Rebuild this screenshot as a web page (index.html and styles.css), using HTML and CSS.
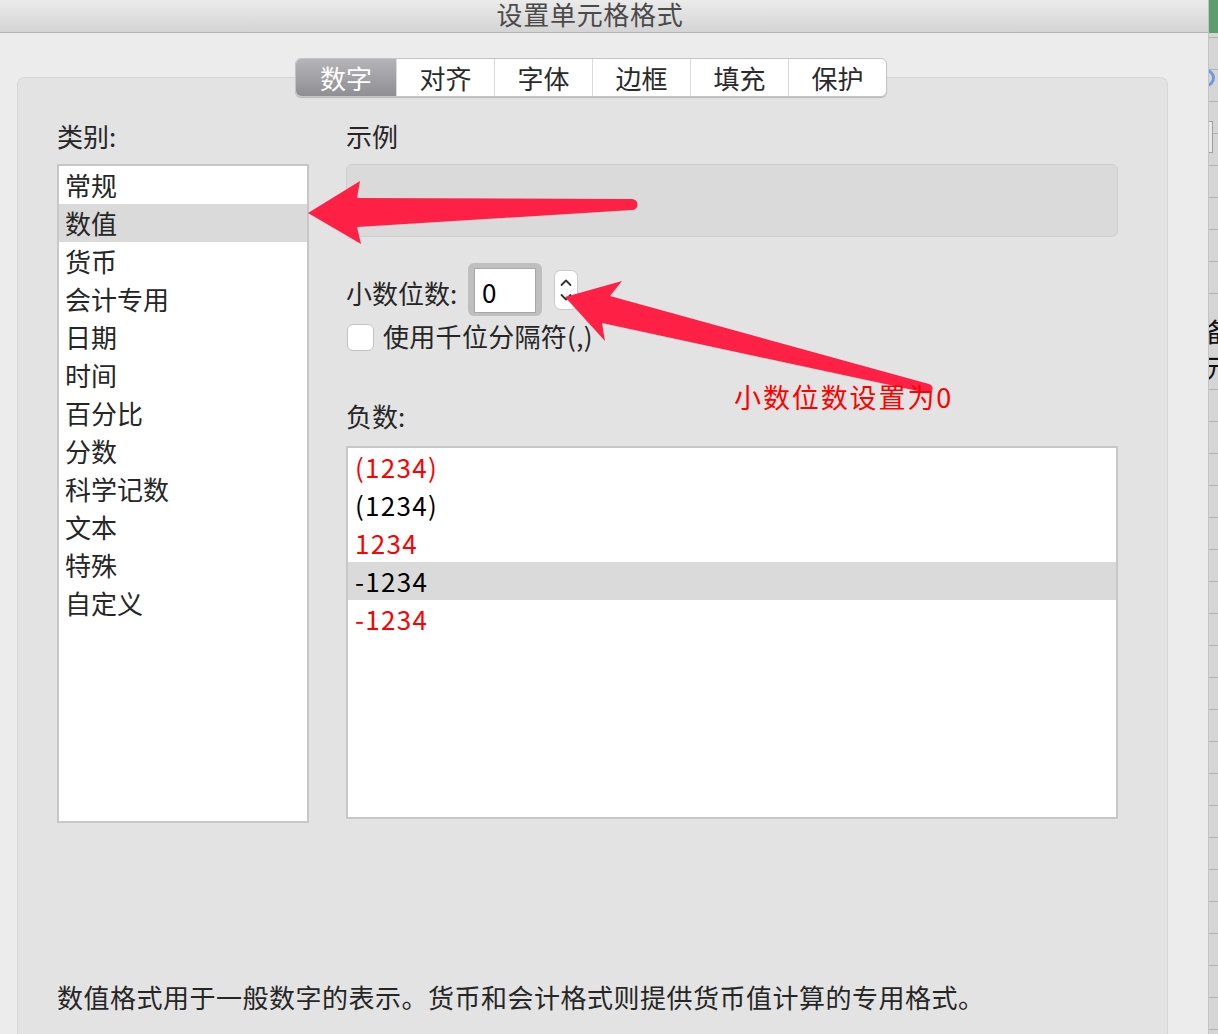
FILE: index.html
```html
<!DOCTYPE html>
<html lang="zh-CN">
<head>
<meta charset="utf-8">
<link rel="stylesheet" href="styles.css">
<title>设置单元格格式</title>
</head>
<body>
<div id="screen">
<div id="dialog">
  <div id="titlebar"><span class="title">设置单元格格式</span></div>
  <div id="panel">
    <div id="tabs">
      <span class="tab selected">数字</span>
      <span class="tab">对齐</span>
      <span class="tab">字体</span>
      <span class="tab">边框</span>
      <span class="tab">填充</span>
      <span class="tab">保护</span>
    </div>
    <div id="columns">
      <div id="category">
        <div class="label">类别:</div>
        <ul class="list" id="catlist">
          <li>常规</li>
          <li class="selected">数值</li>
          <li>货币</li>
          <li>会计专用</li>
          <li>日期</li>
          <li>时间</li>
          <li>百分比</li>
          <li>分数</li>
          <li>科学记数</li>
          <li>文本</li>
          <li>特殊</li>
          <li>自定义</li>
        </ul>
      </div>
      <div id="options">
        <div class="label">示例</div>
        <div id="sample"></div>
        <div id="decimals">
          <span class="caption">小数位数:</span>
          <span class="ring"><span class="field">0</span></span>
          <span class="stepper">
            <svg width="24" height="40" viewBox="0 0 24 40">
              <rect x="0.5" y="0.5" width="23" height="39" rx="6" fill="#fff" stroke="#c9c9c9"/>
              <path d="M7.5 15 L12 10.5 L16.5 15" fill="none" stroke="#333" stroke-width="1.8" stroke-linecap="round" stroke-linejoin="round"/>
              <path d="M7.5 25 L12 29.5 L16.5 25" fill="none" stroke="#333" stroke-width="1.8" stroke-linecap="round" stroke-linejoin="round"/>
            </svg>
          </span>
        </div>
        <label id="thousands"><span class="check"></span>使用千位分隔符(,)</label>
        <div class="label neg">负数:</div>
        <ul class="list" id="neglist">
          <li class="red">(1234)</li>
          <li>(1234)</li>
          <li class="red">1234</li>
          <li class="selected">-1234</li>
          <li class="red">-1234</li>
        </ul>
      </div>
    </div>
    <p id="desc">数值格式用于一般数字的表示。货币和会计格式则提供货币值计算的专用格式。</p>
  </div>
</div>
<div id="behind">
  <div class="sheet-top"></div>
  <div class="sheet-ring"></div>
  <div class="sheet-box"></div>
  <div class="sheet-text first">备</div>
  <div class="sheet-text">元</div>
</div>
</div>

<svg id="marks" width="1218" height="1034" viewBox="0 0 1218 1034">
  <path d="M308 213 L360 181 L357 198 L632 199 A5.5 5.5 0 0 1 632 210 L357 227 L361 244 Z" fill="#ff2145"/>
  <path d="M565 297 L622 281 L610 296 L929 384 A4.5 4.5 0 0 1 927 393 L602 323 L605 341 Z" fill="#ff2145"/>
</svg>
<span id="note">小数位数设置为0</span>
</body>
</html>
```

FILE: styles.css
```css
html, body {
  margin: 0;
  padding: 0;
}
body {
  width: 1218px;
  height: 1034px;
  overflow: hidden;
  position: relative;
  font-family: "Noto Sans CJK SC", "Noto Sans", sans-serif;
  font-size: 26px;
  color: #262626;
  background: #ececec;
}
#screen {
  display: flex;
  height: 1034px;
}
#dialog {
  width: 1208px;
  display: flex;
  flex-direction: column;
  background: #ececec;
}
#titlebar {
  height: 32px;
  display: flex;
  justify-content: center;
  align-items: flex-start;
  background: linear-gradient(#ebebeb, #d4d4d4);
  border-bottom: 1px solid #b3b3b3;
  padding-right: 28px;
}
#titlebar .title {
  font-size: 26px;
  line-height: 28px;
  letter-spacing: 0.7px;
  color: #4a4a4a;
}
#panel {
  flex: 1;
  margin: 44px 40px 0 17px;
  padding: 0 49px 0 39px;
  background: #e3e3e3;
  border: 1px solid #d6d6d6;
  border-bottom: none;
  border-radius: 8px 8px 0 0;
}

/* tabs */
#tabs {
  display: flex;
  width: max-content;
  margin: -20px 0 0 238px;
  background: #fff;
  border: 1px solid #c4c4c4;
  border-radius: 6px;
  box-shadow: 0 1px 1px rgba(0,0,0,0.18);
  overflow: hidden;
}
.tab {
  width: 97px;
  height: 37px;
  line-height: 37px;
  text-align: center;
  color: #2a2a2a;
  border-left: 1px solid #dadada;
}
.tab:first-child { border-left: none; width: 100px; }
.tab.selected {
  color: #fff;
  background: linear-gradient(#b4b4b9, #8e8e93);
}

/* columns */
#columns {
  display: flex;
  gap: 37px;
}
#category { width: 252px; }
#options { width: 772px; }
.label {
  margin-top: 21px;
  height: 36px;
  line-height: 36px;
}
.label.neg { margin-top: 47px; }
.list {
  list-style: none;
  margin: 10px 0 0;
  padding: 0;
  background: #fff;
  border: 2px solid #c7c7c7;
  box-sizing: border-box;
}
.list li {
  height: 38px;
  line-height: 38px;
  padding-left: 6px;
}
.list li.selected { background: #dadada; }
#catlist { height: 659px; }
#neglist {
  margin-top: 12px;
  height: 373px;
}
#neglist li {
  padding-left: 7px;
  color: #000;
  letter-spacing: 1.3px;
}
#neglist li.red { color: #ff0000; }

#sample {
  margin-top: 10px;
  height: 73px;
  box-sizing: border-box;
  background: #dadada;
  border: 1px solid #cfcfcf;
  border-radius: 6px;
}
#decimals {
  margin-top: 26px;
  height: 53px;
  display: flex;
  align-items: center;
}
#decimals .caption { padding-top: 6px; width: 122px; }
.ring {
  width: 74px;
  height: 53px;
  box-sizing: border-box;
  padding: 5px 6px;
  background: #bfbfbf;
  border-radius: 6px;
}
.field {
  display: block;
  height: 43px;
  line-height: 46px;
  padding-left: 7px;
  background: #fff;
  border: 1px solid #a8a8a8;
  color: #000;
}
.stepper {
  margin-left: 12px;
  height: 40px;
}
#thousands {
  margin-top: 5px;
  height: 30px;
  display: flex;
  align-items: center;
  line-height: 30px;
  letter-spacing: 0.3px;
}
.check {
  width: 27px;
  height: 27px;
  box-sizing: border-box;
  margin: 2px 9px 0 1px;
  background: #fff;
  border: 1px solid #c2c2c2;
  border-radius: 6px;
}
#desc {
  margin: 156px 0 0;
  line-height: 36px;
  height: 36px;
  letter-spacing: 0.5px;
}

/* window behind */
#behind {
  width: 10px;
  overflow: hidden;
  display: flex;
  flex-direction: column;
  background: #d5d5d5 repeating-linear-gradient(to bottom, transparent 0 31px, #b5b5b5 31px 32px) 0 6px;
  border-left: 1px solid #c4c4c4;
}
.sheet-top {
  height: 33px;
  flex: none;
  background: #5d9c6f;
}
.sheet-ring {
  flex: none;
  width: 18px;
  height: 18px;
  margin: 36px 0 0 -12px;
  box-sizing: border-box;
  border: 3px solid #6a9be0;
  border-radius: 50%;
}
.sheet-box {
  flex: none;
  width: 3px;
  height: 30px;
  margin-top: 34px;
  border: 1px solid #a0a0a0;
  border-left: none;
  background: #e9e9e9;
}
.sheet-text {
  flex: none;
  white-space: nowrap;
  font-size: 26px;
  line-height: 36px;
  color: #111;
  margin-left: -4px;
}
.sheet-text.first { margin-top: 160px; }

/* annotation */
#marks {
  position: absolute;
  left: 0;
  top: 0;
  pointer-events: none;
}
#note {
  position: absolute;
  left: 734px;
  top: 377px;
  font-size: 27px;
  line-height: 40px;
  letter-spacing: 1.9px;
  color: #ff0000;
}
```
